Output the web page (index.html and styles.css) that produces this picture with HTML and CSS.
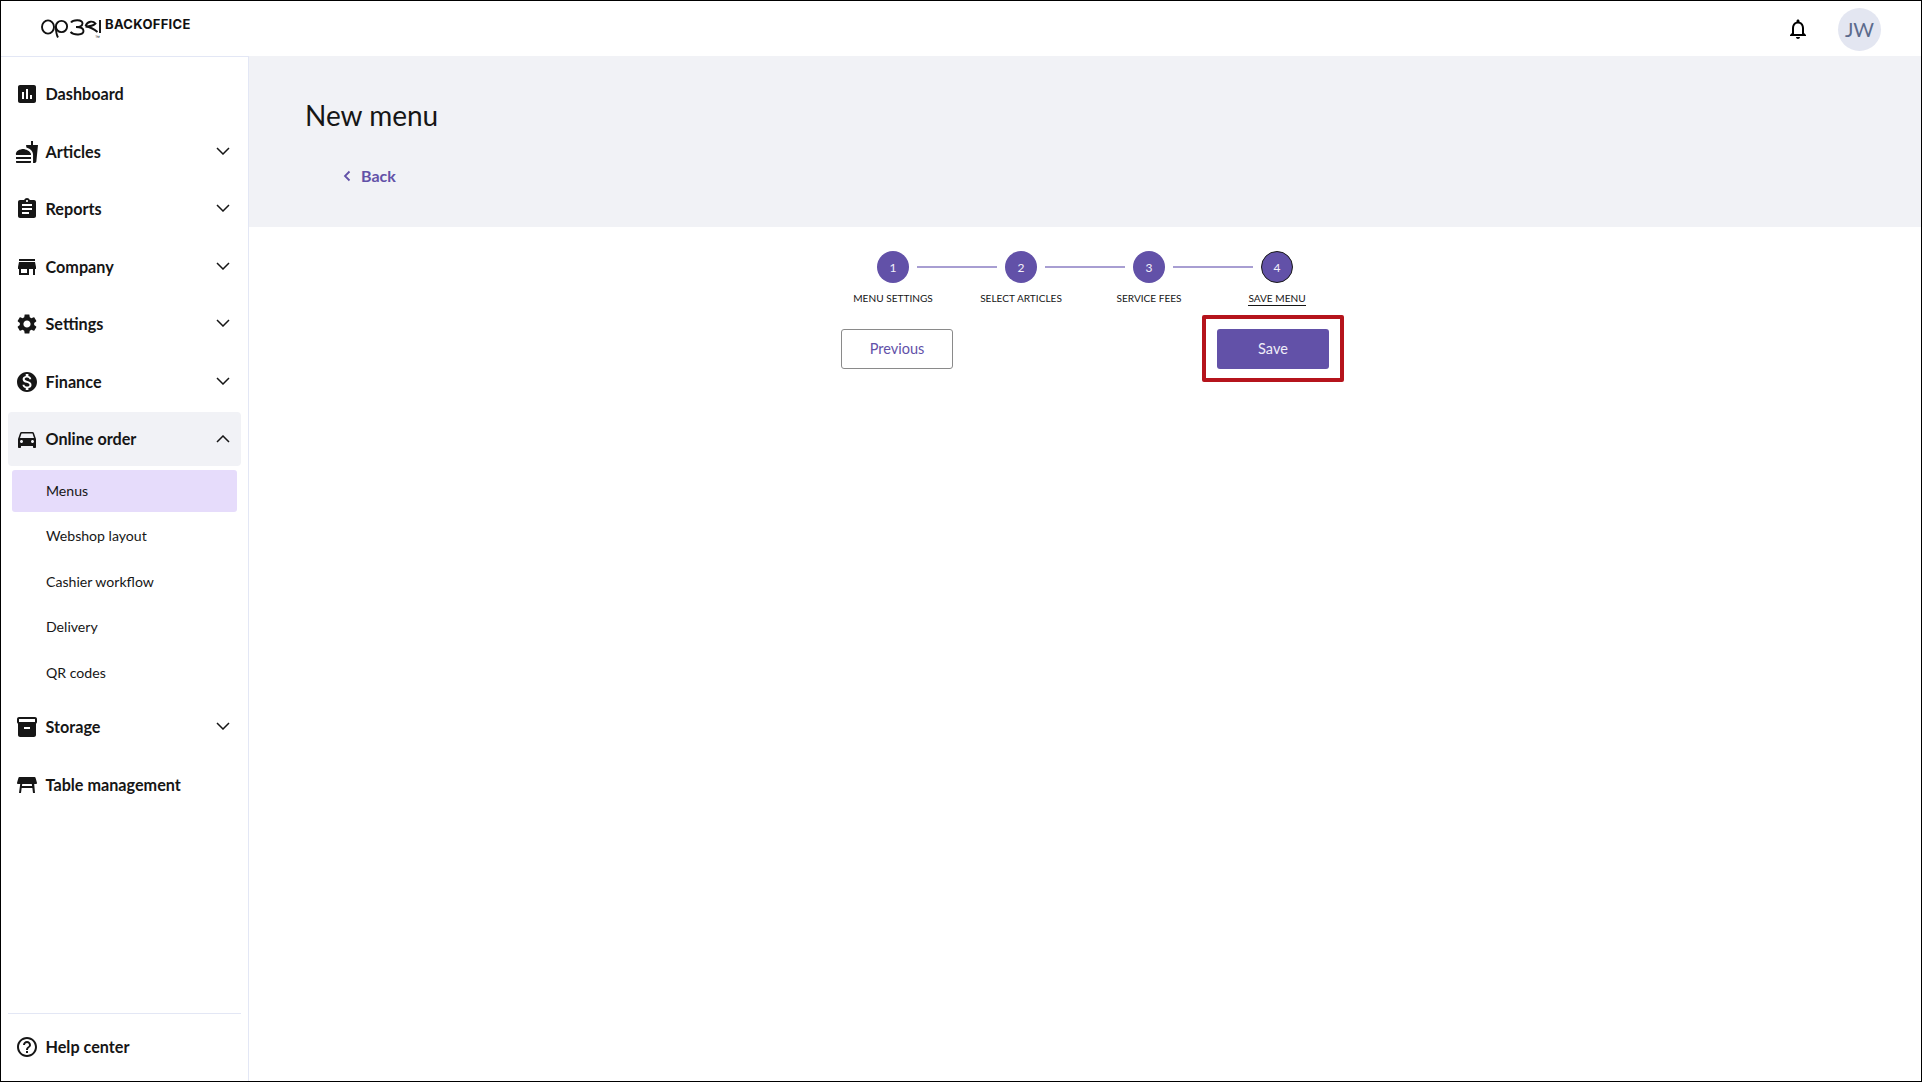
FILE: index.html
```html
<!DOCTYPE html>
<html lang="en">
<head>
<meta charset="utf-8">
<title>New menu</title>
<link rel="stylesheet" href="styles.css">
</head>
<body>
<div class="frame">
  <header class="topbar">
    <div class="brand">
      <svg class="logo" viewBox="0 0 64 24" width="64" height="24" fill="none" stroke="#111" stroke-width="1.9">
        <ellipse cx="8" cy="11" rx="6" ry="6.600"/>
        <circle cx="21.500" cy="10.500" r="5.600"/>
        <path d="M15.900 10.500C15.900 14 16 18 18 21.500"/>
        <path d="M31 6.500C33 3.500 42.500 3 42.500 7.500C42.500 10.300 39 11 36 11C39.500 11 43.500 12 43.500 15C43.500 19.500 34 19.500 30.500 16"/>
        <path d="M45.500 10C47.500 5 53 4.500 55.500 7.500C53 10 49 10.500 45.500 10.500C50 11 54 13 57.500 16"/>
        <path d="M60 4v13"/>
        <text class="tm" x="55" y="22.500">™</text>
      </svg>
      <span class="brand-name">BACKOFFICE</span>
    </div>
    <div class="top-actions">
      <svg class="bell" viewBox="0 0 24 24" width="24" height="24"><path d="M12 22c1.100 0 2-.9 2-2h-4c0 1.100.9 2 2 2zm6-6v-5c0-3.070-1.630-5.640-4.500-6.320V4c0-.83-.67-1.500-1.500-1.500s-1.500.67-1.500 1.500v.68C7.640 5.360 6 7.920 6 11v5l-2 2v1h16v-1l-2-2zm-2 1H8v-6c0-2.480 1.510-4.500 4-4.500s4 2.020 4 4.500v6z"/></svg>
      <div class="avatar">JW</div>
    </div>
  </header>
  <div class="body">
    <aside class="sidebar">
      <nav class="nav">
        <a class="item"><svg class="icon" viewBox="0 0 24 24"><path d="M19 3H5c-1.100 0-2 .9-2 2v14c0 1.100.9 2 2 2h14c1.100 0 2-.9 2-2V5c0-1.100-.9-2-2-2zM9 17H7v-7h2v7zm4 0h-2V7h2v10zm4 0h-2v-4h2v4z"/></svg><span class="label">Dashboard</span></a>
        <a class="item"><svg class="icon" viewBox="0 0 24 24"><path d="M18.060 22.990h1.660c.84 0 1.530-.64 1.630-1.460L23 5.050h-5V1h-1.970v4.050h-4.970l.3 2.340c1.710.47 3.310 1.320 4.270 2.260 1.440 1.420 2.430 2.890 2.430 5.290v8.050zM1 21.990V21h15.030v.99c0 .55-.45 1-1.010 1H2.010c-.56 0-1.010-.45-1.010-1zm15.030-7c.5-4-6.470-6-7.520-6C4.970 8.990 0 11 1 15h15.030zM1.020 17h15v2h-15z"/></svg><span class="label">Articles</span><svg class="chev" viewBox="0 0 14 8"><path d="M1 1l6 6 6-6"/></svg></a>
        <a class="item"><svg class="icon" viewBox="0 0 24 24"><path d="M19 3h-4.180C14.400 1.840 13.300 1 12 1c-1.300 0-2.400.84-2.820 2H5c-1.100 0-2 .9-2 2v14c0 1.100.9 2 2 2h14c1.100 0 2-.9 2-2V5c0-1.100-.9-2-2-2zm-7 0c.55 0 1 .45 1 1s-.45 1-1 1-1-.45-1-1 .45-1 1-1zm2 14H7v-2h7v2zm3-4H7v-2h10v2zm0-4H7V7h10v2z"/></svg><span class="label">Reports</span><svg class="chev" viewBox="0 0 14 8"><path d="M1 1l6 6 6-6"/></svg></a>
        <a class="item"><svg class="icon" viewBox="0 0 24 24"><path d="M20 4H4v2h16V4zm1 10v-2l-1-5H4l-1 5v2h1v6h10v-6h4v6h2v-6h1zm-9 4H6v-4h6v4z"/></svg><span class="label">Company</span><svg class="chev" viewBox="0 0 14 8"><path d="M1 1l6 6 6-6"/></svg></a>
        <a class="item"><svg class="icon" viewBox="0 0 24 24"><path d="M19.140 12.940c.04-.3.06-.61.06-.94 0-.32-.02-.64-.07-.94l2.030-1.580c.18-.14.23-.41.12-.61l-1.920-3.320c-.12-.22-.37-.29-.59-.22l-2.390.96c-.5-.38-1.030-.7-1.620-.94l-.36-2.540c-.04-.24-.24-.41-.48-.41h-3.840c-.24 0-.43.17-.47.41l-.36 2.540c-.59.24-1.130.57-1.620.94l-2.390-.96c-.22-.08-.47 0-.59.22L2.740 8.870c-.12.21-.08.47.12.61l2.030 1.580c-.05.3-.09.63-.09.94s.02.64.07.94l-2.030 1.580c-.18.14-.23.41-.12.61l1.920 3.320c.12.22.37.29.59.22l2.390-.96c.5.38 1.030.7 1.620.94l.36 2.540c.05.24.24.41.48.41h3.840c.24 0 .44-.17.47-.41l.36-2.540c.59-.24 1.130-.56 1.620-.94l2.390.96c.22.08.47 0 .59-.22l1.920-3.320c.12-.22.07-.47-.12-.61l-2.010-1.580zM12 15.600c-1.980 0-3.600-1.620-3.600-3.600s1.620-3.600 3.600-3.600 3.600 1.620 3.600 3.600-1.620 3.600-3.600 3.600z"/></svg><span class="label">Settings</span><svg class="chev" viewBox="0 0 14 8"><path d="M1 1l6 6 6-6"/></svg></a>
        <a class="item"><svg class="icon" viewBox="0 0 24 24"><path d="M12 2C6.480 2 2 6.480 2 12s4.480 10 10 10 10-4.480 10-10S17.520 2 12 2zm1.410 16.090V20h-2.670v-1.930c-1.710-.36-3.160-1.460-3.270-3.400h1.960c.1 1.050.82 1.870 2.650 1.870 1.960 0 2.400-.98 2.400-1.590 0-.83-.44-1.610-2.670-2.140-2.480-.6-4.180-1.620-4.180-3.670 0-1.720 1.390-2.840 3.110-3.210V4h2.670v1.950c1.860.45 2.790 1.860 2.850 3.390H14.300c-.05-1.110-.64-1.870-2.220-1.870-1.500 0-2.400.68-2.400 1.640 0 .84.65 1.390 2.670 1.910s4.180 1.390 4.180 3.910c-.01 1.830-1.380 2.830-3.120 3.160z"/></svg><span class="label">Finance</span><svg class="chev" viewBox="0 0 14 8"><path d="M1 1l6 6 6-6"/></svg></a>
        <a class="item active"><svg class="icon" viewBox="0 0 24 24"><path d="M18.920 6.010C18.720 5.420 18.160 5 17.500 5h-11c-.66 0-1.210.42-1.420 1.010L3 12v8c0 .55.45 1 1 1h1c.55 0 1-.45 1-1v-1h12v1c0 .55.45 1 1 1h1c.55 0 1-.45 1-1v-8l-2.080-5.990zM6.500 16c-.83 0-1.500-.67-1.500-1.500S5.670 13 6.500 13s1.500.67 1.500 1.500S7.330 16 6.500 16zm11 0c-.83 0-1.500-.67-1.500-1.500s.67-1.500 1.500-1.500 1.500.67 1.500 1.500-.67 1.500-1.500 1.500zM5 11l1.500-4.500h11L19 11H5z"/></svg><span class="label">Online order</span><svg class="chev up" viewBox="0 0 14 8"><path d="M1 7l6-6 6 6"/></svg></a>
        <div class="sub">
          <a class="sub-item current">Menus</a>
          <a class="sub-item">Webshop layout</a>
          <a class="sub-item">Cashier workflow</a>
          <a class="sub-item">Delivery</a>
          <a class="sub-item">QR codes</a>
        </div>
        <a class="item"><svg class="icon" viewBox="0 0 24 24"><path d="M20 2H4c-1 0-2 .9-2 2v3.010c0 .72.43 1.340 1 1.690V20c0 1.100 1.100 2 2 2h14c.9 0 2-.9 2-2V8.700c.57-.35 1-.97 1-1.690V4c0-1.100-1-2-2-2zm-5 12H9v-2h6v2zm5-7H4V4l16-.02V7z"/></svg><span class="label">Storage</span><svg class="chev" viewBox="0 0 14 8"><path d="M1 1l6 6 6-6"/></svg></a>
        <a class="item"><svg class="icon" viewBox="0 0 24 24"><path d="M21.960 9.730l-1.430-5c-.12-.43-.51-.73-.96-.73H4.430c-.45 0-.84.3-.96.73l-1.430 5c-.18.63.3 1.270.96 1.270h2.200L4 20h2l.67-5h10.670l.66 5h2l-.8-9H21c.66 0 1.140-.64.96-1.270zM6.930 13l.27-2h9.600l.27 2H6.930z"/></svg><span class="label">Table management</span></a>
      </nav>
      <div class="help">
        <a class="item"><svg class="icon" viewBox="0 0 24 24"><path d="M11 18h2v-2h-2v2zm1-16C6.480 2 2 6.480 2 12s4.480 10 10 10 10-4.480 10-10S17.520 2 12 2zm0 18c-4.410 0-8-3.590-8-8s3.590-8 8-8 8 3.590 8 8-3.590 8-8 8zm0-14c-2.210 0-4 1.790-4 4h2c0-1.100.9-2 2-2s2 .9 2 2c0 2-3 1.750-3 5h2c0-2.250 3-2.500 3-5 0-2.210-1.790-4-4-4z"/></svg><span class="label">Help center</span></a>
      </div>
    </aside>
    <main class="main">
      <section class="banner">
        <h1 class="title">New menu</h1>
        <a class="back"><svg class="back-chev" viewBox="0 0 8 12"><path d="M6.500 1.500L2 6l4.500 4.500"/></svg>Back</a>
      </section>
      <section class="wizard">
        <div class="track">
          <span class="dot">1</span><span class="line"></span>
          <span class="dot">2</span><span class="line"></span>
          <span class="dot">3</span><span class="line"></span>
          <span class="dot now">4</span>
        </div>
        <div class="steps">
          <span class="step">MENU SETTINGS</span>
          <span class="step">SELECT ARTICLES</span>
          <span class="step">SERVICE FEES</span>
          <span class="step"><span class="step-now">SAVE MENU</span></span>
        </div>
        <div class="buttons">
          <button class="btn ghost">Previous</button>
          <div class="highlight"><button class="btn solid">Save</button></div>
        </div>
      </section>
    </main>
  </div>
</div>
</body>
</html>
```

FILE: styles.css
```css
* { box-sizing: border-box; }
html, body { margin: 0; height: 100%; }
body { font-family: Lato, "Liberation Sans", sans-serif; color: #161616; background: #fff; }
.frame { width: 1922px; height: 1082px; border: 1px solid #000; display: flex; flex-direction: column; overflow: hidden; }
.topbar { height: 55px; flex: none; display: flex; align-items: center; justify-content: space-between; padding: 0 40px 0 39px; background: #fff; }
.brand { display: flex; align-items: flex-start; gap: 1px; align-self: flex-start; padding-top: 15px; }
.logo { display: block; }
.tm { font-family: "Liberation Sans", sans-serif; font-size: 5px; fill: #111; stroke: none; }
.brand-name { font-family: Inter, "Liberation Sans", sans-serif; font-weight: 700; font-size: 13px; line-height: 14px; letter-spacing: .3px; color: #111; margin-top: 1px; }
.top-actions { display: flex; align-items: center; gap: 28px; }
.bell { display: block; }
.avatar { width: 43px; height: 43px; border-radius: 50%; background: #e3e6f1; color: #5c6b8c; font-size: 20px; display: flex; align-items: center; justify-content: center; margin-top: 1px; }
.body { flex: 1; display: flex; min-height: 0; }
.sidebar { width: 248px; flex: none; border-right: 1px solid #e3e7f5; border-top: 1px solid #e3e7f5; display: flex; flex-direction: column; justify-content: space-between; padding: 10px 7px 7px 7px; }
.nav { display: flex; flex-direction: column; gap: 3.5px; }
.item { height: 54px; display: flex; align-items: center; padding: 0 7px; border-radius: 4px; gap: 6.5px; font-weight: 700; font-size: 16.2px; color: #161616; }
.item.active { background: #f1f2f6; }
.icon { width: 24px; height: 24px; flex: none; fill: #161616; }
.label { flex: 1; padding-bottom: 1px; }
.chev { width: 14px; height: 8px; flex: none; fill: none; stroke: #161616; stroke-width: 1.5; margin-right: 4px; margin-top: -2px; }
.chev.up { margin-top: 0; }
.sub { display: flex; flex-direction: column; gap: 3.4px; padding: 0 4px; margin: 0 0 3.5px; }
.sub-item { height: 42px; display: flex; align-items: center; padding-left: 34px; font-size: 14.1px; color: #161616; border-radius: 3px; }
.sub-item.current { background: #e6dcfb; }
.help { border-top: 1px solid #e3e7f5; padding-top: 6px; }
.main { flex: 1; min-width: 0; display: flex; flex-direction: column; }
.banner { height: 171px; flex: none; background: #f1f2f6; padding: 39px 56px 0; }
.title { margin: 0; font-weight: 400; font-size: 28px; line-height: 40px; color: #161616; }
.back { display: inline-flex; align-items: center; gap: 10px; margin: 31px 0 0 38px; font-weight: 700; font-size: 16px; line-height: 20px; color: #6251a8; }
.back-chev { width: 8px; height: 12px; fill: none; stroke: #6251a8; stroke-width: 1.8; }
.wizard { width: 512px; margin: 0 auto; padding-top: 24px; display: flex; flex-direction: column; }
.track { display: flex; align-items: center; justify-content: center; gap: 8px; }
.dot { width: 32px; height: 32px; border-radius: 50%; background: #6251a8; color: #f3f1fa; font-size: 12px; display: flex; align-items: center; justify-content: center; }
.dot.now { border: 1px solid #1a1a1a; }
.line { width: 80px; height: 2px; background: #a89ed2; }
.steps { display: grid; grid-template-columns: repeat(4, 1fr); margin-top: 8px; }
.step { text-align: center; font-size: 10.1px; line-height: 14px; color: #161616; }
.step-now { border-bottom: 1px solid #161616; display: inline-block; }
.buttons { display: flex; justify-content: space-between; padding: 0 12px; margin-top: 23px; }
.btn { width: 112px; height: 40px; border-radius: 3px; font-family: Lato, "Liberation Sans", sans-serif; font-size: 14.5px; padding: 0 0 1px; }
.ghost { background: #fff; border: 1px solid #8a8a8a; color: #6251a8; }
.solid { background: #6251a8; border: 0; color: #efedf8; display: block; }
.highlight { position: relative; }
.highlight::after { content: ""; position: absolute; inset: -14px -15px -13px; border: 4px solid #b5141c; border-radius: 2px; pointer-events: none; }
```
